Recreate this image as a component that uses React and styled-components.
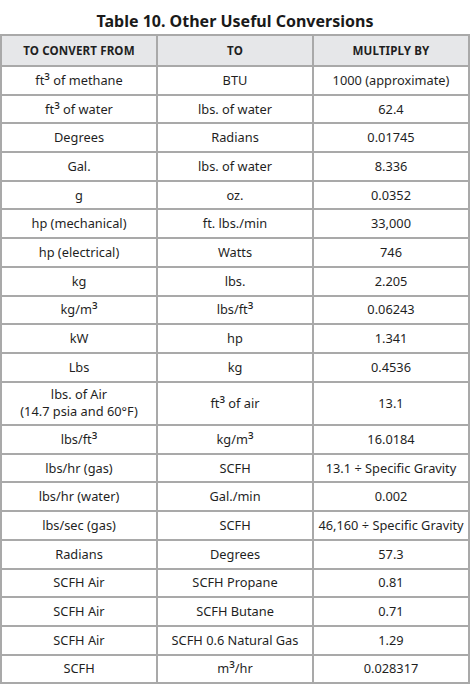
import React from 'react';
import styled, { createGlobalStyle } from 'styled-components';

const GlobalStyle = createGlobalStyle`
  html, body {
    margin: 0;
    padding: 0;
    background: #ffffff;
  }
  body {
    font-family: "Noto Sans", "Open Sans", sans-serif;
    color: #1f1f1f;
  }
`;

const Wrapper = styled.div`
  width: 470px;
  padding-top: 11px;
`;

const Title = styled.h1`
  margin: 0 0 3px;
  font-size: 16px;
  font-weight: 700;
  line-height: 20px;
  text-align: center;
  color: #1a1a1a;
`;

const Table = styled.table`
  width: 470px;
  border-collapse: collapse;
  table-layout: fixed;
  border: 2px solid #a9a9a9;
`;

const HeadCell = styled.th`
  height: 29px;
  padding: 0;
  background: #e6e7e9;
  border: 2px solid #a9a9a9;
  font-size: 11.6px;
  font-weight: 700;
  letter-spacing: 0.1px;
  text-transform: uppercase;
  color: #1f1f1f;
`;

const Cell = styled.td`
  height: ${({ tall }) => (tall ? '41.5px' : '26.7px')};
  padding: 0 4px;
  border: 2px solid #a9a9a9;
  font-size: 12.8px;
  line-height: 17px;
  text-align: center;
  color: #1f1f1f;
`;

// the cube sign is drawn small by Noto Sans; bump it up a little
const Cube = styled.span`
  font-size: 1.25em;
  line-height: 0;
  vertical-align: -1px;
`;

const withCubes = (text) =>
  text.split('³').flatMap((part, i) =>
    i === 0 ? [part] : [<Cube key={i}>³</Cube>, part]
  );

const rows = [
  ['ft³ of methane', 'BTU', '1000 (approximate)'],
  ['ft³ of water', 'lbs. of water', '62.4'],
  ['Degrees', 'Radians', '0.01745'],
  ['Gal.', 'lbs. of water', '8.336'],
  ['g', 'oz.', '0.0352'],
  ['hp (mechanical)', 'ft. lbs./min', '33,000'],
  ['hp (electrical)', 'Watts', '746'],
  ['kg', 'lbs.', '2.205'],
  ['kg/m³', 'lbs/ft³', '0.06243'],
  ['kW', 'hp', '1.341'],
  ['Lbs', 'kg', '0.4536'],
  [['lbs. of Air', '(14.7 psia and 60°F)'], 'ft³ of air', '13.1'],
  ['lbs/ft³', 'kg/m³', '16.0184'],
  ['lbs/hr (gas)', 'SCFH', '13.1 ÷ Specific Gravity'],
  ['lbs/hr (water)', 'Gal./min', '0.002'],
  ['lbs/sec (gas)', 'SCFH', '46,160 ÷ Specific Gravity'],
  ['Radians', 'Degrees', '57.3'],
  ['SCFH Air', 'SCFH Propane', '0.81'],
  ['SCFH Air', 'SCFH Butane', '0.71'],
  ['SCFH Air', 'SCFH 0.6 Natural Gas', '1.29'],
  ['SCFH', 'm³/hr', '0.028317'],
];

const App = () => {
  return (
    <>
      <GlobalStyle />
      <Wrapper>
        <Title>Table 10. Other Useful Conversions</Title>
        <Table>
          <thead>
            <tr>
              <HeadCell>To Convert From</HeadCell>
              <HeadCell>To</HeadCell>
              <HeadCell>Multiply By</HeadCell>
            </tr>
          </thead>
          <tbody>
            {rows.map(([from, to, factor], i) => {
              const tall = Array.isArray(from);
              return (
                <tr key={i}>
                  <Cell tall={tall}>
                    {tall ? (
                      <>
                        {from[0]}
                        <br />
                        {from[1]}
                      </>
                    ) : (
                      withCubes(from)
                    )}
                  </Cell>
                  <Cell tall={tall}>{withCubes(to)}</Cell>
                  <Cell tall={tall}>{factor}</Cell>
                </tr>
              );
            })}
          </tbody>
        </Table>
      </Wrapper>
    </>
  );
};

export default App;
